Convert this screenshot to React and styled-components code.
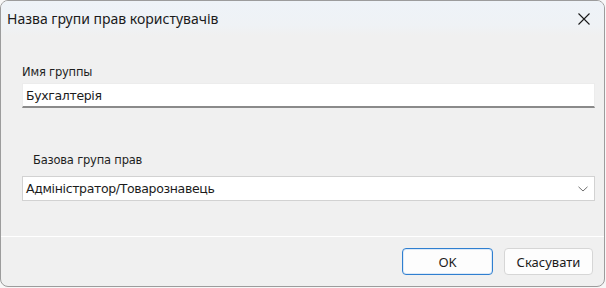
import React from 'react'
import styled, { createGlobalStyle } from 'styled-components'

const GlobalStyle = createGlobalStyle`
    html, body {
        margin: 0;
        padding: 0;
        background: #f7f7f7;
    }
    #root {
        width: 606px;
        height: 288px;
    }
`;

const Window = styled.div`
    box-sizing: border-box;
    width: 605px;
    height: 287px;
    border: 1px solid #9c9c9c;
    border-radius: 8px;
    background: #f0f0f0;
    display: flex;
    flex-direction: column;
    overflow: hidden;
    font-family: "Noto Sans", "Open Sans", sans-serif;
    color: #1b1b1b;
`;

const TitleBar = styled.div`
    height: 35px;
    flex: none;
    display: flex;
    align-items: center;
    justify-content: space-between;
    padding: 0 12px 0 6px;
    background: linear-gradient(to bottom, #eef3f8 0%, #eff2f5 70%, #f0f0f0 100%);
`;

const Title = styled.div`
    font-size: 14px;
    line-height: 18px;
    margin-top: 1px;
`;

const CloseButton = styled.div`
    width: 16px;
    height: 16px;
    display: flex;
    align-items: center;
    justify-content: center;
    margin-top: 1px;
`;

const Body = styled.div`
    flex: 1;
    display: flex;
    flex-direction: column;
    padding: 28px 9px 0 21px;
`;

const Label = styled.div`
    font-family: "DejaVu Sans", sans-serif;
    font-size: 11.5px;
    line-height: 16px;
    height: 16px;
    margin-left: ${p => p.indent || 0}px;
    margin-top: ${p => p.top || 0}px;
    color: #1e1e1e;
    letter-spacing: -0.2px;
`;

const TextField = styled.div`
    box-sizing: border-box;
    height: 25px;
    margin-top: ${p => p.top || 0}px;
    background: #fff;
    border: 1px solid #ececec;
    border-bottom: 2px solid #8a8a8a;
    display: flex;
    align-items: center;
    padding: 0 3px;
    font-family: "DejaVu Sans", sans-serif;
    font-size: 12.5px;
    letter-spacing: -0.35px;
`;

const SelectBox = styled(TextField)`
    border: 1px solid #d2d2d2;
    justify-content: space-between;
    padding: 0 6px 0 3px;
`;

const Footer = styled.div`
    flex: none;
    height: 49px;
    border-top: 1px solid #ffffff;
    display: flex;
    align-items: center;
    justify-content: flex-end;
    gap: 11px;
    padding: 0 11px 0 0;
`;

const Button = styled.div`
    box-sizing: border-box;
    width: ${p => p.w}px;
    height: 27px;
    border-radius: 4px;
    background: #fdfdfd;
    border: 1px solid ${p => (p.primary ? '#2f7fd0' : '#d6d6d6')};
    box-shadow: ${p => (p.primary ? 'inset 0 0 0 1px #dce9f7' : 'none')};
    display: flex;
    align-items: center;
    justify-content: center;
    font-size: 13px;
    color: #1b1b1b;
`;

const App = () => {
    return (
        <>
            <GlobalStyle />
            <Window>
                <TitleBar>
                    <Title>Назва групи прав користувачів</Title>
                    <CloseButton>
                        <svg width="14" height="14" viewBox="0 0 14 14">
                            <path d="M1.5 1.5 L12.5 12.5 M12.5 1.5 L1.5 12.5" stroke="#1a1a1a" strokeWidth="1.1" fill="none" />
                        </svg>
                    </CloseButton>
                </TitleBar>
                <Body>
                    <Label>Имя группы</Label>
                    <TextField top={3}>Бухгалтерія</TextField>
                    <Label indent={11} top={44}>Базова група прав</Label>
                    <SelectBox top={8}>
                        <span>Адміністратор/Товарознавець</span>
                        <svg width="10" height="6" viewBox="0 0 10 6">
                            <path d="M0.5 0.8 L5 5 L9.5 0.8" stroke="#707070" strokeWidth="1" fill="none" />
                        </svg>
                    </SelectBox>
                </Body>
                <Footer>
                    <Button primary w={91}>OK</Button>
                    <Button w={89}>Скасувати</Button>
                </Footer>
            </Window>
        </>
    )
}

export default App;
